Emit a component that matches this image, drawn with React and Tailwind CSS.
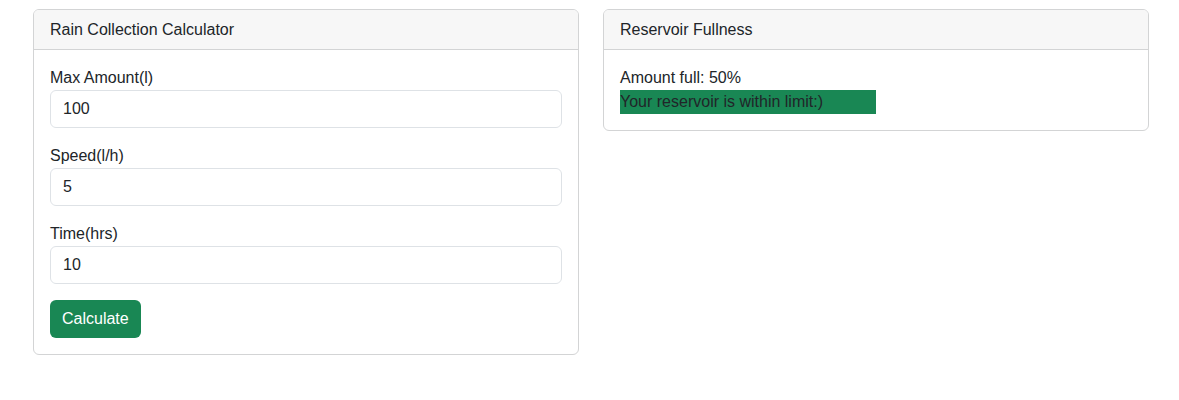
import React, { useState } from "react";

// Simple rain collection calculator card + reservoir fullness card
const Field = ({ label, value, onChange }) => (
  <div className="mb-4">
    <label className="block leading-6">{label}</label>
    <input
      type="text"
      value={value}
      onChange={(e) => onChange(e.target.value)}
      className="block w-full h-[38px] px-3 rounded-md border border-[#dee2e6] bg-white text-[#212529] outline-none"
    />
  </div>
);

const App = () => {
  const [max, setMax] = useState("100");
  const [speed, setSpeed] = useState("5");
  const [time, setTime] = useState("10");
  const [percent, setPercent] = useState(50);

  const calculate = () => {
    const m = parseFloat(max) || 0;
    const total = (parseFloat(speed) || 0) * (parseFloat(time) || 0);
    setPercent(m > 0 ? Math.round((total / m) * 100) : 0);
  };

  const withinLimit = percent <= 100;

  return (
    <div
      className="min-h-screen bg-white text-[#212529] text-base pt-[9px] pl-[33px]"
      style={{ fontFamily: '"Liberation Sans", Arial, sans-serif' }}
    >
      <div className="grid grid-cols-[546px_546px] gap-[24px] items-start">
        {/* Calculator */}
        <div className="border border-[#d3d4d5] rounded-md overflow-hidden">
          <div className="bg-[#f7f7f7] border-b border-[#d3d4d5] px-4 h-[40px] flex items-center">
            Rain Collection Calculator
          </div>
          <div className="p-4">
            <Field label="Max Amount(l)" value={max} onChange={setMax} />
            <Field label="Speed(l/h)" value={speed} onChange={setSpeed} />
            <Field label="Time(hrs)" value={time} onChange={setTime} />
            <button
              onClick={calculate}
              className="h-[38px] px-3 rounded-md bg-[#198754] text-white"
            >
              Calculate
            </button>
          </div>
        </div>

        {/* Result */}
        <div className="border border-[#d3d4d5] rounded-md overflow-hidden">
          <div className="bg-[#f7f7f7] border-b border-[#d3d4d5] px-4 h-[40px] flex items-center">
            Reservoir Fullness
          </div>
          <div className="p-4 leading-6">
            <div>Amount full: {percent}%</div>
            <div
              className={`whitespace-nowrap ${withinLimit ? "bg-[#198754]" : "bg-[#dc3545]"}`}
              style={{ width: `${Math.min(percent, 100)}%` }}
            >
              {withinLimit ? "Your reservoir is within limit:)" : "Your reservoir is overflowing!"}
            </div>
          </div>
        </div>
      </div>
    </div>
  );
};

export default App;
